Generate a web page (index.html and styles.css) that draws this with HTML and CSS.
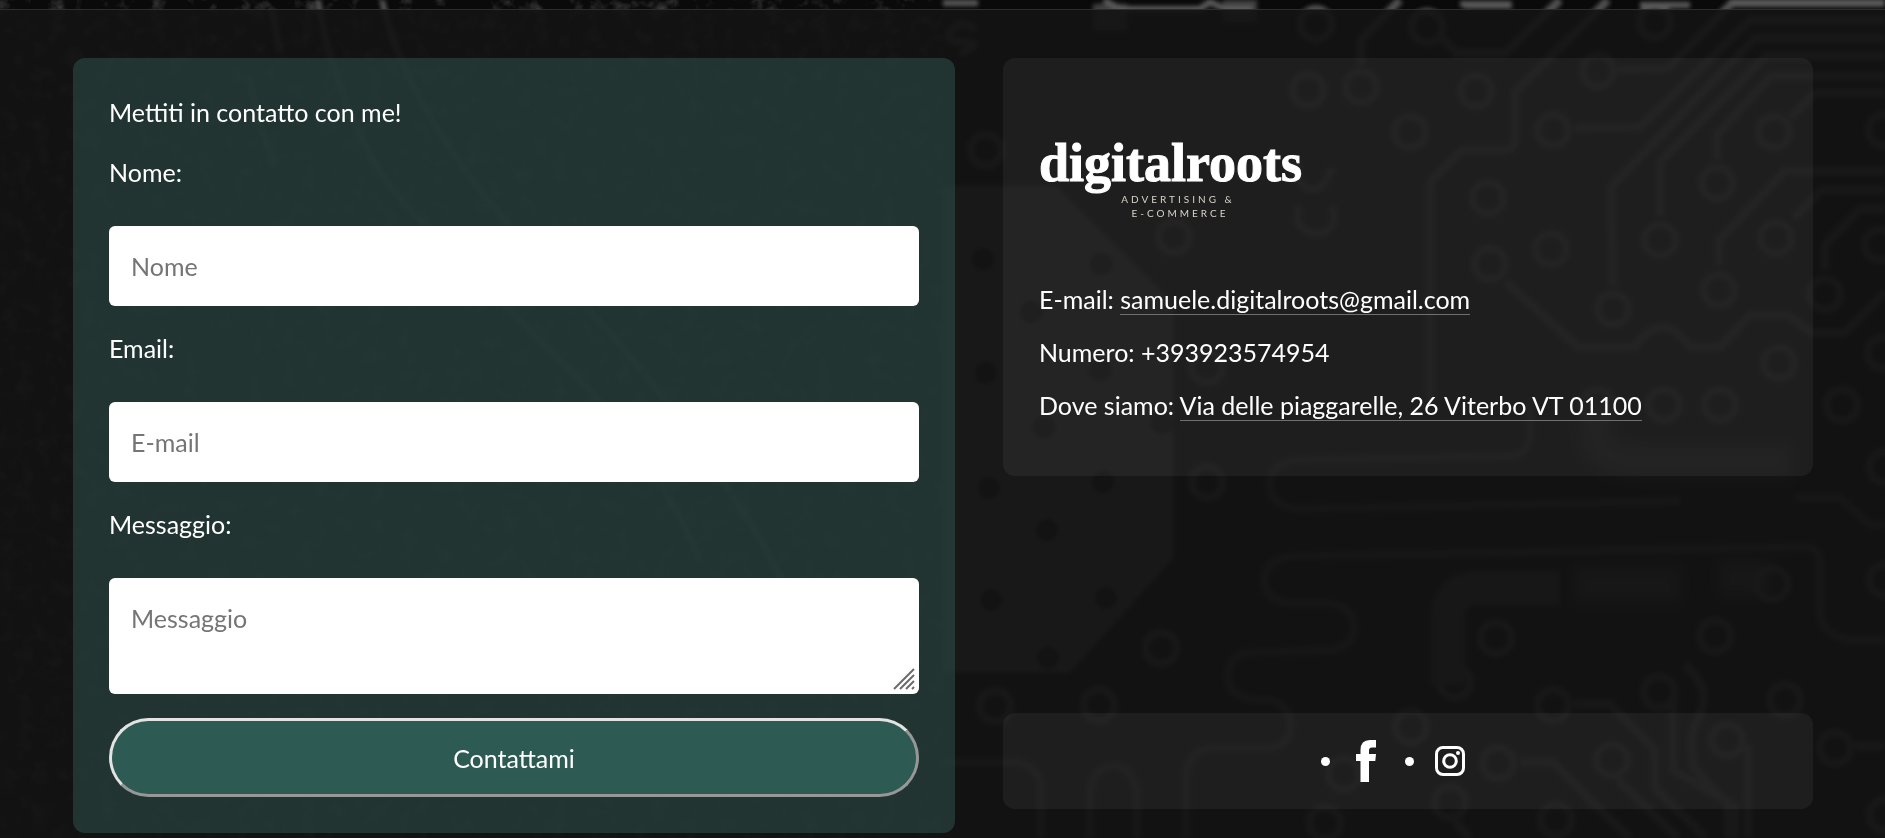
FILE: index.html
```html
<!DOCTYPE html>
<html lang="it">
<head>
<meta charset="utf-8">
<meta name="viewport" content="width=device-width, initial-scale=1">
<title>Digitalroots</title>
<link rel="stylesheet" href="styles.css">
</head>
<body>
<svg class="backdrop" viewBox="0 0 1885 838" preserveAspectRatio="xMidYMid slice" aria-hidden="true">
  <defs>
    <filter id="soft"><feGaussianBlur stdDeviation="2"/></filter>
    <filter id="softer" x="-20%" y="-20%" width="140%" height="140%"><feGaussianBlur stdDeviation="6"/></filter>
    <filter id="grain" x="0" y="0" width="100%" height="100%">
      <feTurbulence type="fractalNoise" baseFrequency="0.06" numOctaves="4" seed="4"/>
      <feColorMatrix values="0 0 0 0 .4  0 0 0 0 .4  0 0 0 0 .4  2.6 0 0 0 -1.3"/>
    </filter>
    <circle id="r" r="15.500"/>
  </defs>
  <rect class="grain" width="943" height="838" filter="url(#grain)"/>
  <g filter="url(#softer)">
    <path class="band" d="M1596 400V440Q1606 462 1640 462H1790M1575 585H1680M1720 578H1770"/>
  </g>
  <g filter="url(#soft)">
    <path class="plate" d="M943 186H1056L1173 302V558L1070 672H943Z"/>
    <g class="hole">
      <circle cx="983" cy="259" r="12"/><circle cx="1101" cy="264" r="12"/><circle cx="1031" cy="312" r="12"/><circle cx="1100" cy="370" r="12"/><circle cx="986" cy="373" r="12"/><circle cx="1044" cy="427" r="12"/><circle cx="1162" cy="423" r="12"/><circle cx="989" cy="488" r="12"/><circle cx="1103" cy="482" r="12"/><circle cx="1047" cy="530" r="12"/><circle cx="991" cy="600" r="12"/><circle cx="1106" cy="598" r="12"/><circle cx="1048" cy="658" r="12"/>
    </g>
    <g class="ring">
      <use href="#r" x="986" y="150"/><use href="#r" x="1316" y="24"/><use href="#r" x="1174" y="237"/><use href="#r" x="1308" y="90"/><use href="#r" x="1361" y="87"/><use href="#r" x="1207" y="367"/><use href="#r" x="1207" y="482"/><use href="#r" x="1161" y="648"/><use href="#r" x="995" y="706"/><use href="#r" x="1099" y="705"/><use href="#r" x="1427" y="27"/><use href="#r" x="1476" y="91"/><use href="#r" x="1410" y="132"/><use href="#r" x="1488" y="198"/><use href="#r" x="1551" y="249"/><use href="#r" x="1490" y="264"/><use href="#r" x="1598" y="71"/><use href="#r" x="1655" y="22"/><use href="#r" x="1553" y="130"/><use href="#r" x="1613" y="309"/><use href="#r" x="1660" y="240"/><use href="#r" x="1717" y="183"/><use href="#r" x="1774" y="132"/><use href="#r" x="1719" y="290"/><use href="#r" x="1776" y="238"/><use href="#r" x="1825" y="294"/><use href="#r" x="1884" y="130"/><use href="#r" x="1880" y="245"/><use href="#r" x="1779" y="363"/><use href="#r" x="1883" y="353"/><use href="#r" x="1598" y="405"/><use href="#r" x="1664" y="405"/><use href="#r" x="1720" y="405"/><use href="#r" x="1842" y="405"/><use href="#r" x="1496" y="638"/><use href="#r" x="1715" y="636"/><use href="#r" x="1772" y="584"/><use href="#r" x="1885" y="580"/><use href="#r" x="1885" y="467"/><use href="#r" x="1411" y="727"/><use href="#r" x="1553" y="705"/><use href="#r" x="1659" y="692"/><use href="#r" x="1727" y="740"/><use href="#r" x="1785" y="700"/><use href="#r" x="1835" y="748"/><use href="#r" x="1498" y="763"/><use href="#r" x="1612" y="760"/><use href="#r" x="1450" y="802"/><use href="#r" x="1556" y="820"/><use href="#r" x="1325" y="823"/><use href="#r" x="1885" y="815"/><use href="#r" x="1344" y="774"/><use href="#r" x="1455" y="682"/>
      <path d="M975 30Q962 18 952 30T964 42T960 54M1332 168Q1322 195 1306 188Q1290 175 1300 162M1332 206Q1340 232 1316 234Q1290 228 1300 206"/>
    </g>
    <g class="trace">
      <path d="M1442 38L1457 53H1505L1560 0M1608 0L1515 92V138Q1515 150 1503 150H1462L1430 182V400M1506 282L1578 347H1635Q1662 308 1690 347H1720L1750 315H1788L1812 333H1845L1885 292"/>
      <path d="M1618 70L1668 68L1732 3H1885M1575 128L1640 127L1750 20H1885M1613 285L1611 187L1755 38H1885M1660 216L1660 162L1766 56H1885M1717 160V135L1771 76H1885M1790 118L1815 93H1885M1719 265V240L1785 171H1885M1794 218L1821 190H1885M1825 270V245L1860 209H1885M1361 65V40L1400 0M1464 5H1512"/>
      <path class="fine" d="M1530 400V435Q1528 455 1510 456L1295 460Q1270 464 1270 485T1300 509L1680 501M1795 498H1840L1870 525H1885M1885 640H1850Q1820 635 1820 610V560Q1818 547 1805 547L1295 556Q1264 560 1264 580T1290 603H1330Q1354 608 1354 627T1330 650L1245 653Q1228 658 1228 677T1255 700H1270Q1291 706 1291 725T1270 748H1210Q1186 752 1186 778V838M943 762H1018Q1041 768 1041 790V838M1090 838V790Q1095 766 1113 766T1137 790V838"/>
      <path d="M1574 704H1610L1655 750V788L1706 838M1673 700V770L1735 806V838M1685 665Q1714 690 1698 718Q1688 735 1694 768L1728 805V838M1748 745V838M1855 746H1885M1520 762H1553L1590 800L1630 838M1618 780L1678 838M1455 822L1470 838"/>
    </g>
    <path class="band" d="M1448 685V612Q1452 590 1475 588H1560M1110 4V30M1240 0V22"/>
    <path class="curve" d="M318 0C326 50 344 105 370 155S440 235 500 300S640 420 700 560M382 0C395 60 430 125 480 190S600 310 680 420S800 600 830 700M272 10L280 52M250 78C256 120 265 140 275 165"/>
    <path class="lit" d="M943 3H978M1104 0L1120 9H1200L1210 2L1225 9H1252M1460 4H1510M1730 3H1885M1640 5H1690"/>
  </g>
</svg>

<main class="contact">
  <form class="panel form">
    <p class="lead">Mettiti in contatto con me!</p>
    <label class="label" for="nome">Nome:</label>
    <input class="field" id="nome" type="text" placeholder="Nome">
    <label class="label" for="email">Email:</label>
    <input class="field" id="email" type="email" placeholder="E-mail">
    <label class="label" for="messaggio">Messaggio:</label>
    <div class="area">
      <textarea class="field message" id="messaggio" placeholder="Messaggio"></textarea>
      <svg class="grip" viewBox="0 0 22 22" aria-hidden="true"><path d="M1 21L21 1M7 21L21 7M13 21L21 13M19 21L21 19"/></svg>
    </div>
    <button class="submit" type="submit">Contattami</button>
  </form>

  <div class="side">
    <section class="panel info">
      <svg class="logo" viewBox="0 0 270 169" role="img" aria-label="digitalroots advertising &amp; e-commerce">
        <text class="wordmark" x="0" y="87">digitalroots</text>
        <text class="tagline" x="139" y="109">ADVERTISING &amp;</text>
        <text class="tagline" x="141" y="123">E-COMMERCE</text>
      </svg>
      <p class="line">E-mail: <a class="link" href="mailto:samuele.digitalroots@gmail.com">samuele.digitalroots@gmail.com</a></p>
      <p class="line">Numero: +393923574954</p>
      <p class="line">Dove siamo: <a class="link" href="#mappa">Via delle piaggarelle, 26 Viterbo VT 01100</a></p>
    </section>

    <ul class="panel social">
      <li class="social-item"><a class="social-link" href="#facebook" aria-label="Facebook">
        <svg class="icon" viewBox="0 0 30 42" aria-hidden="true"><path class="solid" d="M25 0V7.500H21Q18 7.500 18 10.500V14H25L24.300 21H18V42H9.500V21H5V14H9.500V10Q9.500 0 19 0Z"/></svg>
      </a></li>
      <li class="social-item"><a class="social-link" href="#instagram" aria-label="Instagram">
        <svg class="icon" viewBox="0 0 30 42" aria-hidden="true"><rect class="outline" x="1.500" y="7.500" width="27" height="27" rx="6.500"/><circle class="outline" cx="15" cy="21" r="6.300"/><circle class="solid" cx="23" cy="13" r="2"/></svg>
      </a></li>
    </ul>
  </div>
</main>
</body>
</html>
```

FILE: styles.css
```css
* {
  box-sizing: border-box;
}

body {
  margin: 0;
  background: #0a0a0a;
  color: #fff;
  font: 25px/36px Lato, "Open Sans", sans-serif;
}

.backdrop {
  position: fixed;
  inset: 0;
  z-index: -1;
  width: 100%;
  height: 100%;
}

.grain { opacity: 0.3; }
.plate { fill: #555; }
.hole { fill: #101010; }
.ring { fill: none; stroke: #505050; stroke-width: 7px; }
.trace { fill: none; stroke: #505050; stroke-width: 8px; stroke-linejoin: round; }
.fine { stroke: #404040; stroke-width: 7px; }
.band { fill: none; stroke: #404040; stroke-width: 34px; stroke-linejoin: round; }
.curve { fill: none; stroke: #5a5a5a; stroke-width: 5px; }
.lit { fill: none; stroke: #5a5a5a; stroke-width: 6px; }

.contact {
  display: grid;
  grid-template-columns: 49fr 45fr;
  gap: 48px;
  margin-top: 9px;
  padding: 48px 72px 5px 73px;
  border-top: 1px solid #2d2d2d;
  background: rgba(19, 19, 19, 0.92);
}

.panel {
  padding: 36px;
  border-radius: 12px;
  background: rgba(255, 255, 255, 0.05);
}

.form {
  display: flex;
  flex-direction: column;
  background: rgba(48, 86, 80, 0.5);
}

.lead {
  margin: 0;
}

.label {
  margin: 24px 0 36px;
}

.field {
  display: block;
  width: 100%;
  height: 80px;
  padding: 22px;
  border: 0;
  border-radius: 6px;
  background: #fff;
  color: #222;
  font: inherit;
}

.field::placeholder {
  color: #757575;
  opacity: 1;
}

.area {
  position: relative;
}

.message {
  height: 116px;
  resize: none;
}

.grip {
  position: absolute;
  right: 4px;
  bottom: 4px;
  width: 22px;
  height: 22px;
  fill: none;
  stroke: #6b6b6b;
  stroke-width: 2px;
}

.submit {
  height: 79px;
  margin-top: 24px;
  border: 3px solid;
  border-color: #e3e3e3 #979797 #979797 #e3e3e3;
  border-radius: 40px;
  background: #2d5a52;
  color: #fff;
  font: inherit;
}

.side {
  display: flex;
  flex-direction: column;
  justify-content: space-between;
  padding-bottom: 24px;
}

.info {
  padding-bottom: 53px;
}

.logo {
  display: block;
  width: 270px;
  height: 169px;
  margin-bottom: 18px;
  fill: #fff;
}

.wordmark {
  stroke: #fff;
  stroke-width: 1px;
  font: bold 54px "Liberation Serif", serif;
}

.tagline {
  fill: #d8d3cc;
  font: 10px Lato, sans-serif;
  letter-spacing: 3px;
  text-anchor: middle;
}

.line {
  margin: 0 0 17px;
}

.line:last-child {
  margin-bottom: 0;
}

.link {
  border-bottom: 1px solid #707070;
  color: inherit;
  text-decoration: none;
}

.social {
  display: flex;
  justify-content: center;
  gap: 24px;
  height: 96px;
  margin: 0;
  padding: 0 30px 0 0;
  list-style: none;
}

.social-item {
  display: flex;
  align-items: center;
  gap: 21px;
}

.social-item::before {
  content: "";
  width: 9px;
  height: 9px;
  border-radius: 50%;
  background: #fff;
}

.icon {
  display: block;
  width: 30px;
  height: 42px;
}

.solid {
  fill: #fff;
}

.outline {
  fill: none;
  stroke: #fff;
  stroke-width: 3px;
}
```
